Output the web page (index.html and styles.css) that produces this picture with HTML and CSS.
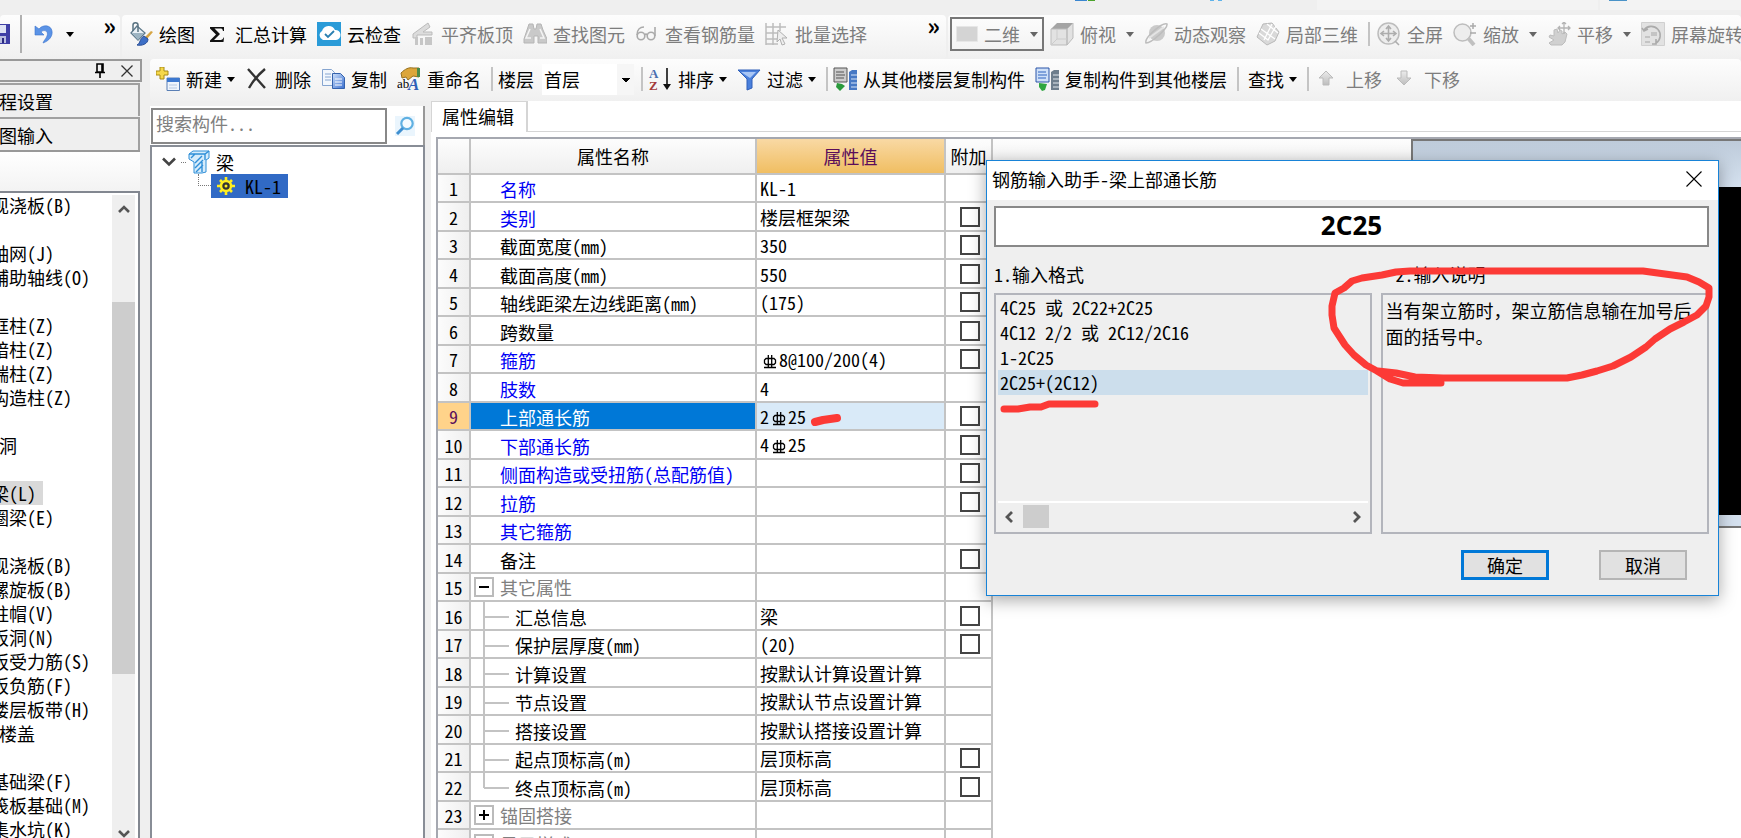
FILE: index.html
```html
<!DOCTYPE html>
<html lang="zh-CN">
<head>
<meta charset="utf-8">
<title>属性编辑</title>
<link rel="stylesheet" href="styles.css">
</head>
<body>
<svg class="defs" aria-hidden="true">
  <defs>
    <linearGradient id="gBlue" x1="0" y1="0" x2="1" y2="1"><stop offset="0" stop-color="#cfe2fb"/><stop offset="1" stop-color="#3a6fd0"/></linearGradient>
    <linearGradient id="gGray" x1="0" y1="0" x2="0" y2="1"><stop offset="0" stop-color="#ececec"/><stop offset="1" stop-color="#bdbdbd"/></linearGradient>
    <symbol id="rebar" viewBox="0 0 14 16"><g fill="none" stroke="#000" stroke-width="1.300"><path d="M3 4.500h8l1.500 1.500v3L11 10.500H3L1.500 9V6zM5.300 1v12M8.700 1v12M1 13.500h12"/></g></symbol>
    <symbol id="beam" viewBox="0 0 22 24"><path d="M1 4l4-3h16v7l-3 2v12l-4 1H6V12l-5-3z" fill="#d6ecfb" stroke="#2f8fd8"/><path d="M1 4h16l4-3M17 4v6M7 13l7-7M3 8l4-4M7 18l8-8M8 22l7-7M14 12v10" stroke="#2f8fd8" fill="none" stroke-width="1.4"/></symbol>
  </defs>
</svg>
<div class="app">
  <svg class="top-strip" aria-hidden="true"><rect x="1317" y="0" width="281" height="10" fill="#f3f3f3"/><rect x="1600" y="0" width="141" height="10" fill="#f3f3f3"/><path d="M1075 0h12v1h-12z" fill="#3a86d0"/><path d="M1088 0h7v1h-7z" fill="#4ba32c"/><path d="M1210 0h4v1h-4zM1218 0h4v1h-4z" fill="#5fb3ea"/><path d="M1609 0h18v1h-18z" fill="#4a93c8"/></svg>

  <div class="bars">
    <div class="bar seg-file">
      <button class="tool save" aria-label="保存"><svg width="10" height="22" viewBox="0 0 10 22"><path d="M0 1h10v20H0z" fill="#3f3fa6"/><path d="M0 2h6v8H0z" fill="#dfe3f4"/><path d="M0 13h6v7H0z" fill="#b9bde0"/><path d="M2 15h2v5H2z" fill="#2b2b80"/></svg></button>
      <span class="sep tall"></span>
      <button class="tool" aria-label="撤销"><svg width="20" height="20" viewBox="0 0 20 20"><path d="M1 2v9h9L7 8c3-3 8-1 6 4-1 3-3 4-4 7 6-2 10-7 9-12C17 1 9 0 5 5z" fill="#5b93e6" stroke="#3b74cf" stroke-width=".6"/></svg></button>
      <i class="caret"></i>
      <button class="more" aria-label="更多">»</button>
    </div>
    <div class="bar seg-main">
      <button class="tool"><svg class="ic" viewBox="0 0 24 24"><path d="M8 4l8 7-7 7-7-7z" fill="#eaf1f6" stroke="#5f7a8c" stroke-width="1.300"/><path d="M4 9V3c0-3 5-3 5 0v7" fill="none" stroke="#56707f" stroke-width="1.500"/><path d="M3 11h12l-6 7z" fill="#9db4c2"/><path d="M24 10l-6 7-3-1 7-7z" fill="#d6a545"/><path d="M15 14l4 3c0 5-6 7-11 6 4-2 2-6 7-9z" fill="#3d6fc6" stroke="#2a4e96"/></svg>绘图</button>
      <button class="tool"><svg class="ic" viewBox="0 0 24 24"><path d="M5 5h14v4h-1c-.5-2-1-2.500-3-2.500H9.500L15 12l-6 6h6.500c2 0 2.500-1 3-2.500H19L18.500 20H5v-1.500l6-6L5 6.500z" fill="#111"/></svg>汇总计算</button>
      <button class="tool"><svg class="ic" viewBox="0 0 24 24"><path d="M0 0h24v24H0z" fill="#2a9bd8"/><path d="M6 18a5 5 0 0 1-1-9 7 7 0 0 1 13-1 5 5 0 0 1 1 10z" fill="#fff"/><path d="M8 12l3 3 6-6" fill="none" stroke="#2a7fb0" stroke-width="1.800"/></svg>云检查</button>
      <button class="tool off"><svg class="ic" viewBox="0 0 24 24"><path d="M2 12L17 1l2 4-7 5h9v3H6v3H2z" fill="#dcdcdc" stroke="#bbb"/><path d="M4 15h3v8H4zM9 16h3v7H9zM14 15h7v8h-7z" fill="#c6c6c6"/></svg>平齐板顶</button>
      <button class="tool off"><svg class="ic" viewBox="0 0 24 24"><path d="M6 2h4l1 5h2l1-5h4l2 6 4 9v4h-9v-7h-4v7H1v-4l3-9z" fill="#c9c9c9" stroke="#b5b5b5"/><path d="M7 7L3 16h5M17 7l4 9h-4" stroke="#f4f4f4" stroke-width="1.500" fill="none"/></svg>查找图元</button>
      <button class="tool off"><svg class="ic" viewBox="0 0 24 24"><g fill="none" stroke="#aaa" stroke-width="1.600"><circle cx="6" cy="14" r="3.800"/><circle cx="16" cy="14" r="3.800"/><path d="M2 13C2 8 5 5 9 5M20 14V5M10 13q1-2 2 0"/></g></svg>查看钢筋量</button>
      <button class="tool off"><svg class="ic" viewBox="0 0 24 24"><path d="M1 1v22M8 1v22M15 1v8M1 5h20M1 11h12M1 17h12M1 22h12" stroke="#bdbdbd" stroke-width="1.500" fill="none"/><path d="M13 8l9 8h-5l3 6-3 1-2-6-3 3z" fill="#eee" stroke="#b0b0b0"/></svg>批量选择</button>
      <button class="more push" aria-label="更多">»</button>
    </div>
    <div class="bar seg-view">
      <button class="dim off"><svg width="22" height="16" viewBox="0 0 22 16"><path d="M.5.500h21v15H.5z" fill="#d4d4d4" stroke="#e6e6e6"/></svg>二维<i class="caret"></i></button>
      <button class="tool off"><svg class="ic" viewBox="0 0 24 24"><path d="M1 7l6-6h16l-6 6z" fill="#a4a4a4"/><path d="M1 7h16v16H1zM17 7l6-6v15l-6 7z" fill="#e2e2e2" stroke="#bbb"/><path d="M7 7v10h10M7 17l-6 6" stroke="#ccc" fill="none"/></svg>俯视<i class="caret"></i></button>
      <button class="tool off"><svg class="ic" viewBox="0 0 24 24"><circle cx="13" cy="11" r="8" fill="#cacaca"/><path d="M2 21C0 16 18 0 23 2c1 4-15 19-21 19z" fill="none" stroke="#bdbdbd" stroke-width="1.500"/><path d="M5 16L20 5" fill="none" stroke="#e4e4e4" stroke-width="2"/></svg>动态观察</button>
      <button class="tool off"><svg class="ic" viewBox="0 0 24 24"><path d="M7 2l9-1 7 9-4 9-8 4-10-8z" fill="#d9d9d9" stroke="#b8b8b8"/><path d="M3 11l9 7 8-14M11 2l11 9M5 7l14 10M8 18l8-16" stroke="#fff" fill="none" stroke-width="1.300"/></svg>局部三维</button>
      <span class="sep"></span>
      <button class="tool off"><svg class="ic" viewBox="0 0 24 24"><circle cx="11.500" cy="11.500" r="10.500" fill="#ededed" stroke="#bdbdbd" stroke-width="1.500"/><path d="M11.500 4v15M4 11.500h15M9 7l2.500-3L14 7M9 16l2.500 3 2.500-3M7 9l-3 2.500L7 14M16 9l3 2.500-3 2.500M18 19l4 4" stroke="#adadad" stroke-width="1.600" fill="none"/></svg>全屏</button>
      <button class="tool off"><svg class="ic" viewBox="0 0 24 24"><circle cx="9.500" cy="10.500" r="8.500" fill="#ededed" stroke="#bdbdbd" stroke-width="1.500"/><path d="M15 16l6 7" stroke="#c0c0c0" stroke-width="4"/><path d="M17 4h6M20 1v6M17 11h6" stroke="#aaa" stroke-width="1.500"/></svg>缩放<i class="caret"></i></button>
      <button class="tool off"><svg class="ic" viewBox="0 0 24 24"><path d="M3 13l4 1V8l3-1 1 4 2-3 2 1v3l3-2 2 2-2 8-3 3H4l-2-2 5-3-5-3z" fill="#d0d0d0" stroke="#bcbcbc"/><path d="M17 0v12M11 6h12M15 2l2-2 2 2M21 4l2 2-2 2M13 4l-2 2 2 2" stroke="#b4b4b4" fill="none" stroke-width="1.300"/></svg>平移<i class="caret"></i></button>
      <button class="tool off"><svg class="ic" viewBox="0 0 24 24"><path d="M.5.500h23v23H.5z" fill="#e2e2e2" stroke="#d0d0d0"/><path d="M3 8a9 9 0 1 1 12 13M1 6l2 3 4-2M15 17v5h-4" fill="none" stroke="#ababab" stroke-width="1.600"/><path d="M10 10h6v4h-6zM4 14h5v2H4zM4 19h5v2H4z" fill="#c4c4c4"/></svg>屏幕旋转</button>
    </div>
  </div>

  <div class="main">
    <aside class="nav">
      <div class="nav-head">
        <button class="tool" aria-label="固定"><svg width="12" height="16" viewBox="0 0 12 16"><path d="M3 1h6v8H3zM8 1v8M1 9.500h10M6 10v5" fill="none" stroke="#000" stroke-width="1.600"/></svg></button>
        <button class="tool" aria-label="关闭"><svg width="14" height="14" viewBox="0 0 14 14"><path d="M1.500 1.500l11 11M12.500 1.500l-11 11" stroke="#333" stroke-width="1.300"/></svg></button>
      </div>
      <button class="nav-btn">工程设置</button>
      <button class="nav-btn">绘图输入</button>
      <div class="nav-band"></div>
      <div class="nav-list">
        <ul class="modules">
          <li>现浇板<b>(B)</b></li><li></li><li>轴网<b>(J)</b></li><li>辅助轴线<b>(O)</b></li><li></li>
          <li>框柱<b>(Z)</b></li><li>暗柱<b>(Z)</b></li><li>端柱<b>(Z)</b></li><li>构造柱<b>(Z)</b></li><li></li>
          <li class="group">窗洞</li><li></li><li><span class="current">梁<b>(L)</b></span></li><li>圈梁<b>(E)</b></li><li></li>
          <li>现浇板<b>(B)</b></li><li>螺旋板<b>(B)</b></li><li>柱帽<b>(V)</b></li><li>板洞<b>(N)</b></li><li>板受力筋<b>(S)</b></li>
          <li>板负筋<b>(F)</b></li><li>楼层板带<b>(H)</b></li><li class="group">心楼盖</li><li></li>
          <li>基础梁<b>(F)</b></li><li>筏板基础<b>(M)</b></li><li>集水坑<b>(K)</b></li>
        </ul>
        <div class="vscroll">
          <svg width="12" height="8" viewBox="0 0 12 8"><path d="M1 7l5-5 5 5" fill="none" stroke="#555" stroke-width="2.600"/></svg>
          <div class="track"><div class="thumb"></div></div>
          <svg width="12" height="8" viewBox="0 0 12 8"><path d="M1 1l5 5 5-5" fill="none" stroke="#555" stroke-width="2.600"/></svg>
        </div>
      </div>
    </aside>

    <section class="work">
      <div class="bar bar2">
        <button class="tool"><svg class="ic" viewBox="0 0 24 24"><path d="M4 0h4v4h4v4H8v4H4V8H0V4h4z" fill="#f5d84a" stroke="#a98a14"/><path d="M11 11h12.500v12.500H11z" fill="#eef4fc" stroke="#5a7fb5"/><path d="M11 11h12.500v4H11z" fill="#3c78d0"/><path d="M13 18h8M13 21h8" stroke="#b6c8e2"/></svg>新建<i class="caret"></i></button>
        <button class="tool"><svg class="ic" viewBox="0 0 24 24"><path d="M3 2l17 19M20 2C14 7 8 14 4 21" fill="none" stroke="#333" stroke-width="2.400"/></svg>删除</button>
        <button class="tool"><svg class="ic" viewBox="0 0 24 24"><path d="M1.500 2.500h9l3 3v13h-12z" fill="#f2f7fd" stroke="#86a5d0"/><path d="M4 7h6M4 10h6M4 13h6" stroke="#86a5d0"/><path d="M11.500 6.500h8l4 4v11h-12z" fill="url(#gBlue)" stroke="#3462ad"/><path d="M14 12h7M14 15h7M14 18h7" stroke="#fff"/></svg>复制</button>
        <button class="tool"><svg class="ic" viewBox="0 0 24 24"><path d="M4 6c4-4 8-6 12-5h6v9l-6-1-5 4-2-3-4 1z" fill="#dca63a" stroke="#96701e"/><path d="M20 1h3v9h-3z" fill="#4a8a4a"/><text x="0" y="21" class="ab">ab</text><text x="11" y="23" class="big-a">A</text></svg>重命名</button>
        <span class="sep"></span>
        <label for="floor">楼层</label>
        <select id="floor"><option>首层</option></select>
        <span class="sep"></span>
        <button class="tool"><svg class="ic" viewBox="0 0 24 24"><text x="1" y="11" class="az-a">A</text><text x="1" y="23" class="az-z">Z</text><path d="M19 1v17" stroke="#111" stroke-width="1.600"/><path d="M15 17h8l-4 6z" fill="#111"/></svg>排序<i class="caret"></i></button>
        <button class="tool"><svg class="ic" viewBox="0 0 24 24"><path d="M1 3h22l-8 9v9l-5 2V12z" fill="#4a80dc" stroke="#2f5fb8"/><path d="M4 5h15l-6 6z" fill="#a9c6f5"/></svg>过滤<i class="caret"></i></button>
        <span class="sep"></span>
        <button class="tool"><svg class="ic" viewBox="0 0 24 24"><path d="M1 1h13v14H1z" fill="#ccc" stroke="#555"/><path d="M3 5h8M3 8h9M3 11h8" stroke="#555"/><path d="M4 16l5 1 3 2-5 5-4-4z" fill="#2a9a3c"/><path d="M16 5l3-2h5v20h-8z" fill="#4678c4"/><path d="M18 8h6M18 12h6M18 16h6M18 20h6" stroke="#d5e4f8"/></svg>从其他楼层复制构件</button>
        <button class="tool"><svg class="ic" viewBox="0 0 24 24"><path d="M1 1h13v14H1z" fill="#cfe0f8" stroke="#2a55a8"/><path d="M3 5h8M3 8h9M3 11h8" stroke="#2f62bf"/><path d="M4 16l8 1-2 6-3 1-3-4z" fill="#2fa640"/><path d="M16 5l3-2h5v20h-8z" fill="#6e7e8c"/><path d="M18 8h6M18 12h6M18 16h6M18 20h6" stroke="#e3e9ee"/></svg>复制构件到其他楼层</button>
        <span class="sep"></span>
        <button class="tool plain">查找<i class="caret"></i></button>
        <span class="sep"></span>
        <button class="tool off"><svg class="mv" viewBox="0 0 26 24"><path d="M12 4l7 7h-4v7H9v-7H5z" fill="url(#gGray)" stroke="#bbb"/></svg>上移</button>
        <button class="tool off"><svg class="mv" viewBox="0 0 26 24"><path d="M12 18l7-7h-4V4H9v7H5z" fill="url(#gGray)" stroke="#bbb"/></svg>下移</button>
      </div>

      <div class="panes">
        <div class="tree-pane">
          <div class="search">
            <input type="text" placeholder="搜索构件..." aria-label="搜索构件">
            <button class="find" aria-label="搜索"><svg width="20" height="20" viewBox="0 0 20 20"><path d="M0 0h20v20H0z" fill="#eaf5fd"/><circle cx="12" cy="7.500" r="5.700" fill="#f4fbff" stroke="#5fb0e2" stroke-width="2.200"/><path d="M8 12l-6 6" stroke="#3f8fd0" stroke-width="3"/></svg></button>
          </div>
          <div class="tree">
            <div class="node root"><svg width="14" height="10" viewBox="0 0 14 10"><path d="M1 1.500l6 6 6-6" fill="none" stroke="#444" stroke-width="2.600"/></svg><i class="dots"></i><svg width="22" height="24"><use href="#beam"/></svg><span>梁</span></div>
            <div class="node leaf"><i class="elbow"></i><span class="picked"><svg width="18" height="18" viewBox="0 0 18 18"><path d="M9 0v18M0 9h18M3 3l12 12M15 3L3 15" stroke="#ffee20" stroke-width="2.600"/><circle cx="9" cy="9" r="5" fill="#333" stroke="#ffee20" stroke-width="2.500"/><circle cx="9" cy="9" r="1.500" fill="#ffee20"/></svg><b>KL-1</b></span></div>
          </div>
        </div>

        <div class="editor">
          <div class="tabs"><button class="tab">属性编辑</button></div>
          <div class="sheet">
            <table class="props">
              <colgroup><col class="c-n"><col class="c-name"><col class="c-val"><col class="c-add"></colgroup>
              <thead><tr><th></th><th>属性名称</th><th class="hot">属性值</th><th>附加</th></tr></thead>
              <tbody>
                <tr><th>1</th><td class="k">名称</td><td><b>KL-1</b></td><td></td></tr>
                <tr><th>2</th><td class="k">类别</td><td>楼层框架梁</td><td><input type="checkbox" aria-label="附加 类别"></td></tr>
                <tr><th>3</th><td>截面宽度<b>(mm)</b></td><td><b>350</b></td><td><input type="checkbox" aria-label="附加 截面宽度"></td></tr>
                <tr><th>4</th><td>截面高度<b>(mm)</b></td><td><b>550</b></td><td><input type="checkbox" aria-label="附加 截面高度"></td></tr>
                <tr><th>5</th><td>轴线距梁左边线距离<b>(mm)</b></td><td><b>(175)</b></td><td><input type="checkbox" aria-label="附加 轴线距离"></td></tr>
                <tr><th>6</th><td>跨数量</td><td></td><td><input type="checkbox" aria-label="附加 跨数量"></td></tr>
                <tr><th>7</th><td class="k">箍筋</td><td><svg class="rb"><use href="#rebar"/></svg><b>8@100/200(4)</b></td><td><input type="checkbox" aria-label="附加 箍筋"></td></tr>
                <tr><th>8</th><td class="k">肢数</td><td><b>4</b></td><td></td></tr>
                <tr class="active"><th>9</th><td class="k">上部通长筋</td><td><b>2</b><svg class="rb"><use href="#rebar"/></svg><b>25</b></td><td><input type="checkbox" aria-label="附加 上部通长筋"></td></tr>
                <tr><th>10</th><td class="k">下部通长筋</td><td><b>4</b><svg class="rb"><use href="#rebar"/></svg><b>25</b></td><td><input type="checkbox" aria-label="附加 下部通长筋"></td></tr>
                <tr><th>11</th><td class="k">侧面构造或受扭筋<b>(</b>总配筋值<b>)</b></td><td></td><td><input type="checkbox" aria-label="附加 侧面构造筋"></td></tr>
                <tr><th>12</th><td class="k">拉筋</td><td></td><td><input type="checkbox" aria-label="附加 拉筋"></td></tr>
                <tr><th>13</th><td class="k">其它箍筋</td><td></td><td></td></tr>
                <tr><th>14</th><td>备注</td><td></td><td><input type="checkbox" aria-label="附加 备注"></td></tr>
                <tr class="grp"><th>15</th><td><div class="fold"><button class="pm minus" aria-label="折叠"></button>其它属性</div></td><td></td><td></td></tr>
                <tr class="sub"><th>16</th><td>汇总信息</td><td>梁</td><td><input type="checkbox" aria-label="附加 汇总信息"></td></tr>
                <tr class="sub"><th>17</th><td>保护层厚度<b>(mm)</b></td><td><b>(20)</b></td><td><input type="checkbox" aria-label="附加 保护层厚度"></td></tr>
                <tr class="sub"><th>18</th><td>计算设置</td><td>按默认计算设置计算</td><td></td></tr>
                <tr class="sub"><th>19</th><td>节点设置</td><td>按默认节点设置计算</td><td></td></tr>
                <tr class="sub"><th>20</th><td>搭接设置</td><td>按默认搭接设置计算</td><td></td></tr>
                <tr class="sub"><th>21</th><td>起点顶标高<b>(m)</b></td><td>层顶标高</td><td><input type="checkbox" aria-label="附加 起点顶标高"></td></tr>
                <tr class="sub last"><th>22</th><td>终点顶标高<b>(m)</b></td><td>层顶标高</td><td><input type="checkbox" aria-label="附加 终点顶标高"></td></tr>
                <tr class="grp"><th>23</th><td><div class="fold"><button class="pm plus" aria-label="展开"></button>锚固搭接</div></td><td></td><td></td></tr>
                <tr class="grp"><th></th><td><div class="fold"><button class="pm plus" aria-label="展开"></button>显示样式</div></td><td></td><td></td></tr>
              </tbody>
            </table>
            <div class="blank"></div>
            <div class="viewport"><div class="vp-title"></div><div class="vp-canvas"></div><div class="vp-foot"></div></div>
          </div>
        </div>
      </div>
    </section>
  </div>
</div>

<div class="dialog" role="dialog" aria-labelledby="dlg-title">
  <div class="dlg-head"><span id="dlg-title">钢筋输入助手-梁上部通长筋</span><button class="tool" aria-label="关闭"><svg width="16" height="16" viewBox="0 0 16 16"><path d="M.5.500l15 15M15.500.500l-15 15" stroke="#000" stroke-width="1.100"/></svg></button></div>
  <div class="dlg-body">
    <input class="value" type="text" value="2C25" aria-label="钢筋信息">
    <div class="cols">
      <div class="col">
        <div class="cap"><b>1.</b>输入格式</div>
        <div class="box">
          <ul class="formats"><li><b>4C25 </b>或<b> 2C22+2C25</b></li><li><b>4C12 2/2 </b>或<b> 2C12/2C16</b></li><li><b>1-2C25</b></li><li class="sel"><b>2C25+(2C12)</b></li></ul>
          <div class="hscroll"><svg width="10" height="12" viewBox="0 0 10 12"><path d="M8 1L3 6l5 5" fill="none" stroke="#555" stroke-width="2.800"/></svg><div class="hthumb"></div><svg width="10" height="12" viewBox="0 0 10 12"><path d="M2 1l5 5-5 5" fill="none" stroke="#555" stroke-width="2.800"/></svg></div>
        </div>
      </div>
      <div class="col">
        <div class="cap indent"><b>2.</b>输入说明</div>
        <div class="box note">当有架立筋时，架立筋信息输在加号后面的括号中。</div>
      </div>
    </div>
    <div class="actions"><button class="btn primary">确定</button><button class="btn">取消</button></div>
  </div>
</div>

<svg class="ink" aria-hidden="true">
  <g fill="none" stroke="#fc3a36" stroke-width="7" stroke-linecap="round" stroke-linejoin="round">
    <path d="M815 422L823 420L837 418" stroke-width="8"/>
    <path d="M1004 409L1018 409L1030 407L1041 407L1049 404L1095 404"/>
    <path d="M1441 383H1418L1403 383L1390 379L1377 371L1366 365L1354 355L1345 345L1334 328L1332 315L1332 306L1335 293L1344 288L1352 281L1362 278L1382 275L1396 272L1410 271H1643L1665 274L1687 277L1699 282L1709 288L1709 297L1706 306L1697 315L1684 322L1670 329L1655 339L1646 347L1631 357L1613 366L1597 371L1582 375L1567 378H1443L1415 377L1396 373L1378 371"/>
  </g>
</svg>
</body>
</html>
```

FILE: styles.css
```css
* { box-sizing: border-box; }
html, body { height: 100%; }
body {
  margin: 0;
  overflow: hidden;
  position: relative;
  background: #efefef;
  color: #000;
  font: 18px/24px "Noto Sans Mono CJK SC", "Noto Sans CJK SC", sans-serif;
}
button, input, select { font: inherit; color: inherit; margin: 0; border-radius: 0; }
button { background: none; border: 0; padding: 0; white-space: nowrap; }
b { font-weight: 400; white-space: pre; }
ul { list-style: none; margin: 0; padding: 0; }
svg { flex: none; display: block; }
.defs { position: absolute; width: 0; height: 0; }

.app { height: 100vh; display: flex; flex-direction: column; }
.top-strip { width: 100%; height: 15px; }

/* toolbars */
.bars { display: flex; gap: 2px; height: 44px; flex: none; }
.bar {
  display: flex;
  align-items: center;
  overflow: hidden;
  padding-bottom: 6px;
  background: linear-gradient(#fdfdfd, #f0f0f0);
  border-radius: 4px;
}
.seg-file { flex: 0 0 120px; }
.seg-main { flex: 0 0 824px; padding: 0 6px 6px 7px; }
.seg-view { flex: 1; padding-left: 2px; }
.tool { display: flex; align-items: center; gap: 6px; margin-right: 10px; flex: none; }
.tool .ic { width: 24px; height: 24px; }
.mv { width: 26px; height: 24px; }
.off { color: #7d7d7d; }
.caret { flex: none; border: 4px solid transparent; border-top: 5px solid #000; border-bottom: 0; }
.bar2 .caret { margin-left: -1px; }
.off .caret { border-top-color: #666; margin-left: 4px; }
.sep { flex: none; width: 2px; height: 24px; margin-right: 7px; background: #c4c4c4; }
.sep.tall { height: 38px; background: #b0b0b0; margin-right: 12px; }
.save { margin-right: 10px; }
.seg-file .caret { margin: 0 auto 0 2px; }
.more { align-self: flex-start; font-size: 24px; font-weight: 700; line-height: 20px; }
.seg-file .more { margin-right: 4px; }
.push { margin-left: auto; }
.dim {
  display: flex;
  align-items: center;
  gap: 6px;
  width: 94px;
  height: 34px;
  padding: 0 4px;
  margin-right: 6px;
  border: 2px solid #777;
  flex: none;
}
.dim .caret { margin-left: auto; }

.main { flex: 1; min-height: 0; display: flex; gap: 8px; }

/* left navigation */
.nav { flex: 0 0 142px; overflow: hidden; display: flex; flex-direction: column; }
.nav-head {
  display: flex;
  justify-content: flex-end;
  align-items: center;
  gap: 14px;
  height: 23px;
  border: 2px solid #999;
  border-left: 0;
  padding-right: 6px;
}
.nav-head .tool { margin: 0; }
.nav-btn {
  margin: 1px 2px 0 -19px;
  height: 33px;
  flex: none;
  text-align: left;
  border: solid #a0a0a0;
  border-width: 2px 2px 0 0;
}
.nav-band { height: 41px; flex: none; margin-right: 2px; border-top: 2px solid #999; background: linear-gradient(#fff, #f3f3f3); }
.nav-list {
  flex: 1;
  min-height: 0;
  display: flex;
  margin-right: 2px;
  background: #fff;
  border: solid #828790;
  border-width: 2px 2px 0 0;
}
.modules { flex: 1; min-width: 0; margin-left: -19px; white-space: nowrap; }
.modules li { height: 24px; padding-left: 10px; }
.modules .group { padding-left: 0; }
.current { display: inline-block; height: 24px; padding-right: 7px; background: #d9d9d9; }
.vscroll { width: 23px; margin: 2px 3px 0 0; background: #efefef; display: flex; flex-direction: column; align-items: center; justify-content: space-between; padding-top: 10px; }
.track { flex: 1; align-self: stretch; padding: 89px 0 156px; }
.thumb { height: 100%; background: #cdcdcd; }

.work { flex: 1; min-width: 0; display: flex; flex-direction: column; }
.bar2 { flex: none; height: 42px; padding: 0 0 2px 6px; }
.bar2 label { margin-right: 8px; }
.bar2 .sep { margin-right: 5px; }
.bar2 select {
  appearance: none;
  width: 92px;
  height: 31px;
  padding: 0 2px;
  margin-right: 7px;
  border: 0;
  background: linear-gradient(#000, #000) 80px 14px / 8px 1px no-repeat, linear-gradient(#000, #000) 81px 15px / 6px 1px no-repeat, linear-gradient(#000, #000) 82px 16px / 4px 1px no-repeat, linear-gradient(#000, #000) 83px 17px / 2px 1px no-repeat, linear-gradient(90deg, #fff 75px, #f6f6f6 75px);
}
.plain { padding-left: 4px; }
.ab { font: 13px "Liberation Serif", serif; }
.big-a { font: italic bold 17px "Liberation Serif", serif; fill: #2f5fb8; }
.az-a { font: bold 13px "Liberation Serif", serif; fill: #4a6fb0; }
.az-z { font: bold 13px "Liberation Serif", serif; fill: #a33a3a; }

.panes { flex: 1; min-height: 0; display: flex; gap: 6px; }

/* component tree */
.tree-pane { flex: 0 0 275px; display: flex; flex-direction: column; padding-top: 5px; }
.search { display: flex; align-items: center; background: #fff; border-right: 2px solid #999; padding: 2px 8px 1px 1px; }
.search input { flex: 1; min-width: 0; height: 36px; padding: 0 3px 6px; border: 2px solid #888; background: #fff; }
.search input::placeholder { color: #808080; opacity: 1; }
.find { padding: 0 0 0 8px; }
.tree { flex: 1; background: #fff; border: 2px solid #888d96; border-bottom: 0; padding: 3px 0 0 10px; }
.node { display: flex; align-items: center; height: 24px; }
.dots { width: 5px; margin: 0 2px 0 5px; border-top: 1px dotted #777; }
.node.root span { margin-left: 6px; }
.elbow { align-self: flex-start; width: 13px; height: 12px; margin-left: 36px; border: dotted #777; border-width: 0 0 1px 1px; }
.picked { display: flex; align-items: center; gap: 10px; width: 77px; height: 24px; padding-left: 6px; background: #316ac5; }

/* property sheet */
.editor { flex: 1; min-width: 0; display: flex; flex-direction: column; background: #fff; }
.tabs { height: 31px; flex: none; border-bottom: 1px solid #d5d5d5; }
.tab { height: 31px; padding: 0 12px 2px 10px; border: solid #d5d5d5; border-width: 1px 2px 0 1px; background: #fff; }
.sheet {
  flex: 1;
  min-height: 0;
  display: flex;
  align-items: flex-start;
  margin: 5px 0 0 5px;
  border: solid #a5a8b0;
  border-width: 2px 0 0 2px;
  overflow: hidden;
}
.props { flex: none; width: 554px; table-layout: fixed; border-collapse: collapse; }
.c-n { width: 32px; }
.c-name { width: 286px; }
.c-val { width: 189px; }
.c-add { width: 47px; }
.props th, .props td {
  height: 28px;
  padding: 0 0 0 3px;
  border: solid #c3c3c3;
  border-width: 0 2px 2px 0;
  line-height: 20px;
  text-align: left;
  white-space: nowrap;
}
.props tr:nth-child(even) > * { height: 29px; }
.props th { font-weight: 400; text-align: center; padding: 0; background: linear-gradient(90deg, #fcfcfc, #efefef); }
.props thead th { height: 35px; background: linear-gradient(#fdfdfd, #efefef); }
.props thead th.hot { background: linear-gradient(#f9d9a4, #f0be62); color: #5a0d5a; }
.props td:nth-child(2) { padding: 2px 0 0 29px; }
.props td:last-child { padding: 0 0 0 14px; }
.props .k { color: #0000f5; }
.props .active th { background: #ffd38a; color: #5a0d5a; }
.props .active .k { background: #0078d7; color: #fff; }
.props .active td:nth-child(3) { background: #d9eaf8; }
.props input { appearance: none; display: block; width: 20px; height: 20px; border: 2px solid #444; background: #fff; }
.rb { display: inline-block; width: 14px; height: 16px; margin: 0 2px 0 3px; vertical-align: -3px; }
.props .grp td { color: #808080; }
.props .grp td:nth-child(2) { padding: 0 0 0 3px; }
.fold { display: flex; align-items: center; gap: 6px; }
.pm {
  width: 20px;
  height: 20px;
  border: 2px solid #bbb;
  background: linear-gradient(#000, #000) center / 10px 2px no-repeat, #fff;
}
.plus { background: linear-gradient(#000, #000) center / 10px 2px no-repeat, linear-gradient(#000, #000) center / 2px 10px no-repeat, #fff; }
.props .sub td:nth-child(2) {
  padding-left: 44px;
  background: linear-gradient(#c3c3c3, #c3c3c3) 12px 0 / 2px 100% no-repeat, linear-gradient(#c3c3c3, #c3c3c3) 13px 14px / 25px 2px no-repeat;
}
.props .sub.last td:nth-child(2) {
  background: linear-gradient(#c3c3c3, #c3c3c3) 12px 0 / 2px 15px no-repeat, linear-gradient(#c3c3c3, #c3c3c3) 13px 14px / 25px 2px no-repeat;
}
.blank { flex: 0 0 418px; height: 34px; background: linear-gradient(#fdfdfd, #efefef); }
.viewport { flex: 1; border: solid #777; border-width: 2px 0 2px 2px; }
.vp-title { height: 46px; background: linear-gradient(#becbda, #d5e1ef); }
.vp-canvas { height: 328px; background: #000; }
.vp-foot { height: 11px; background: #d5e1ef; }

/* floating helper window */
.dialog {
  position: absolute;
  left: 986px;
  top: 160px;
  width: 733px;
  border: 1px solid #1883d7;
  background: #efefef;
  box-shadow: 0 4px 16px rgba(0, 0, 0, .35);
}
.dlg-head { display: flex; justify-content: space-between; align-items: center; height: 39px; padding: 0 6px 3px 5px; background: #fff; }
.dlg-body { padding: 6px 9px 15px 7px; }
.value {
  display: block;
  width: 100%;
  height: 41px;
  padding: 0 0 3px;
  border: 2px solid #888;
  background: #fff;
  text-align: center;
  font: bold 26px/34px "Noto Sans", sans-serif;
}
.cols { display: grid; grid-template-columns: 379fr 328fr; gap: 9px; padding-top: 14px; }
.cap { height: 32px; line-height: 26px; }
.indent { padding-left: 14px; }
.box { height: 241px; border: 2px solid #b3b5bc; display: flex; flex-direction: column; }
.formats { flex: 1; padding: 0 2px; }
.formats li { height: 25px; padding-left: 2px; }
.formats .sel { background: #ccdeec; }
.hscroll { height: 29px; margin: 0 2px 2px; padding: 0 6px; display: flex; align-items: center; border-top: 2px solid #fff; }
.hthumb { width: 26px; height: 23px; margin: 0 auto 0 9px; background: #cdcdcd; }
.note { display: block; padding: 2px 10px 0 2px; line-height: 26px; }
.actions { display: flex; justify-content: flex-end; gap: 50px; padding: 16px 22px 0 0; }
.btn { width: 88px; height: 30px; line-height: 24px; border: 2px solid #b5b5b5; background: #e1e1e1; }
.primary { border: 3px solid #0078d7; }

.ink { position: absolute; left: 0; top: 0; width: 100%; height: 100%; pointer-events: none; }
```
